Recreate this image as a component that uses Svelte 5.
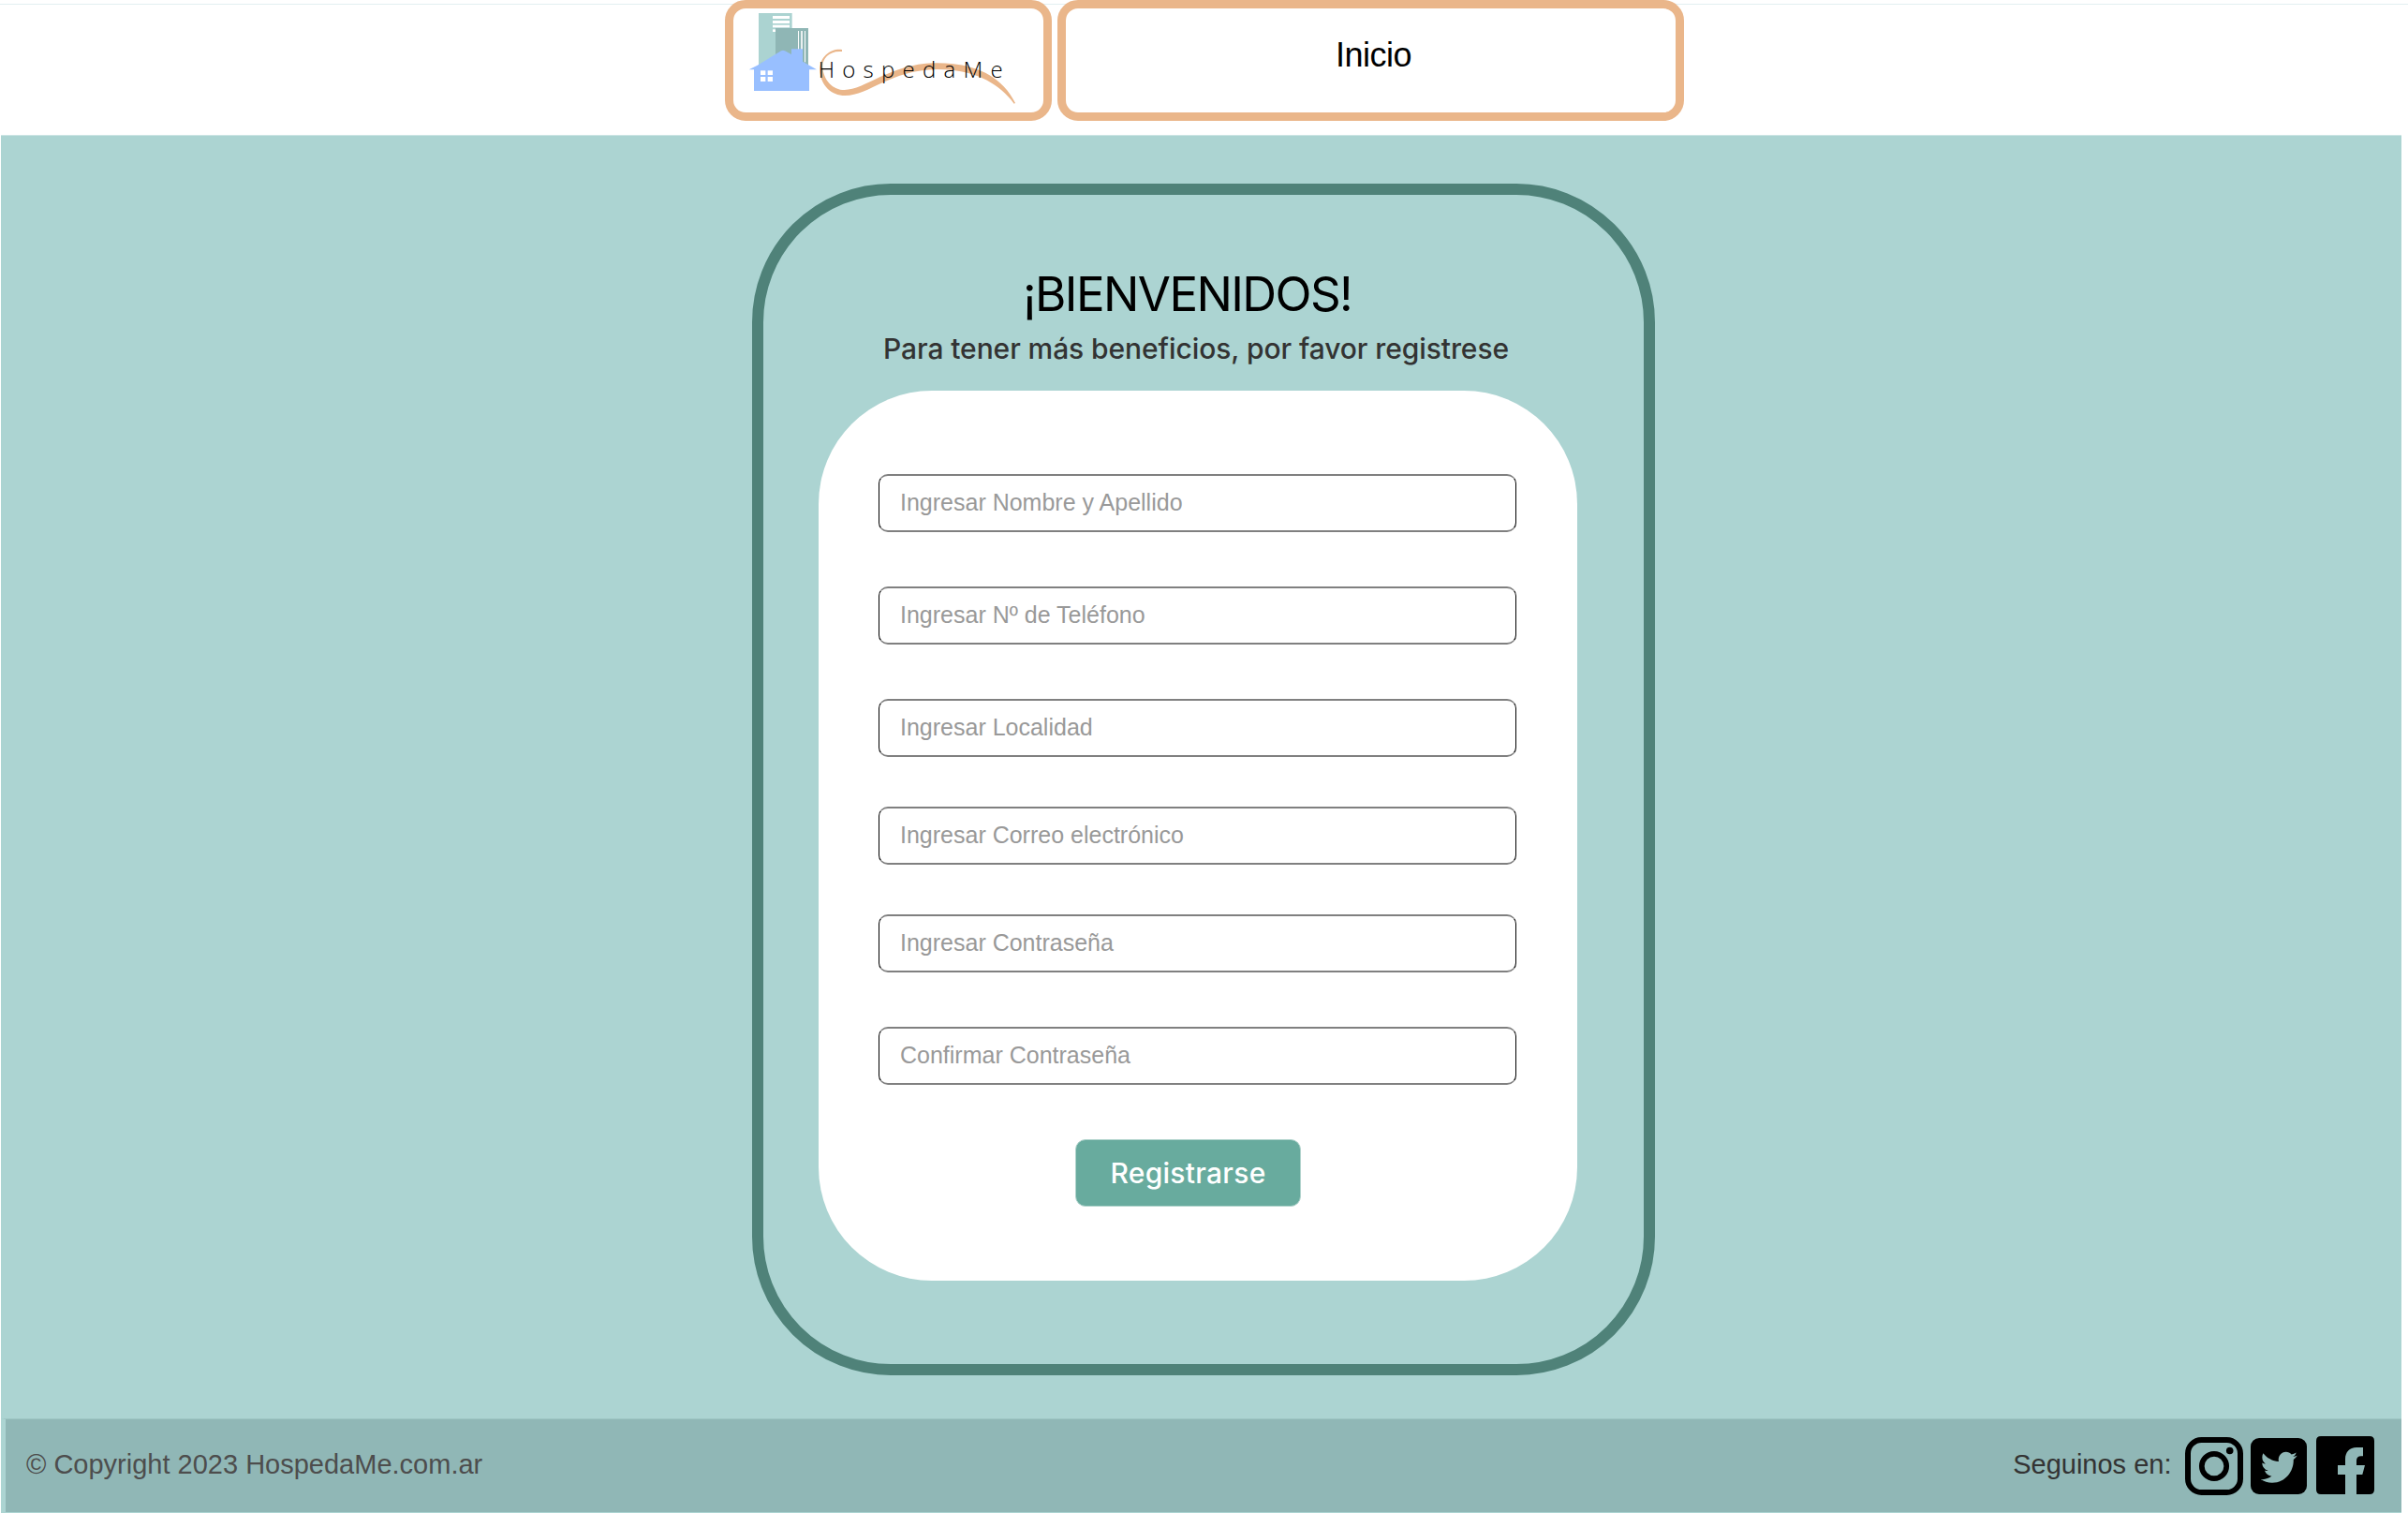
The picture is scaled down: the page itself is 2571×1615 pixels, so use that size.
<script>
  const fields = [
    { label: 'Ingresar Nombre y Apellido', type: 'text' },
    { label: 'Ingresar Nº de Teléfono', type: 'tel' },
    { label: 'Ingresar Localidad', type: 'text' },
    { label: 'Ingresar Correo electrónico', type: 'email', tight: true },
    { label: 'Ingresar Contraseña', type: 'password', tight: true },
    { label: 'Confirmar Contraseña', type: 'password' }
  ];
</script>

<div class="page">
  <header class="header">
    <div class="box brand">
      <svg class="logo" viewBox="69 27 993 333" role="img" aria-label="HospedaMe">
        <!-- towers -->
        <rect x="150" y="42" width="107" height="170" fill="#abd3d1" />
        <g fill="#fff">
          <rect x="195" y="51" width="54" height="9" />
          <rect x="195" y="66" width="54" height="9" />
          <rect x="195" y="80" width="54" height="8" />
          <rect x="195" y="94" width="54" height="8" />
        </g>
        <rect x="204" y="90" width="105" height="122" fill="#8fb6b5" />
        <g fill="#fff">
          <rect x="276" y="99" width="3" height="100" />
          <rect x="285" y="99" width="6" height="100" opacity="0.8" />
          <rect x="297" y="99" width="3" height="100" />
        </g>
        <!-- house -->
        <path fill="#98bfff" d="M119 223 L146 209 L222 163 Q228 159 234 163 L255 174 V157 H291 V197 L336 223 H312 V291 H135 V223 Z" />
        <g fill="#fff">
          <rect x="156" y="226" width="16" height="14" />
          <rect x="179" y="226" width="16" height="14" />
          <rect x="156" y="246" width="16" height="15" />
          <rect x="179" y="246" width="16" height="15" />
        </g>
        <path
          fill="#eab68a"
          d="M417 159 C384 154 346 178 346 224 C348 272 382 306 427 306 C505 306 570 224 722 222 C820 222 912 254 968 332 L972 330 C925 236 830 200 712 202 C570 206 490 288 425 288 C388 288 358 258 355 215 C353 190 374 161 417 165 Z"
        />
        <text x="341" y="249" class="wordmark">HospedaMe</text>
      </svg>
    </div>
    <nav class="box menu"><a href="#inicio">Inicio</a></nav>
  </header>

  <main class="main">
    <section class="card">
      <h1>¡BIENVENIDOS!</h1>
      <p class="lead">Para tener más beneficios, por favor registrese</p>
      <form class="panel">
        {#each fields as field}
          <input class:tight={field.tight} type={field.type} placeholder={field.label} aria-label={field.label} />
        {/each}
        <button type="button">Registrarse</button>
      </form>
    </section>
  </main>

  <footer class="footer">
    <span class="copy">© Copyright 2023 HospedaMe.com.ar</span>
    <div class="social">
      <span class="follow">Seguinos en:</span>
      <svg class="instagram" viewBox="0 0 62 62" aria-hidden="true">
        <rect x="3" y="3" width="56" height="56" rx="14.5" fill="none" stroke="#000" stroke-width="6" />
        <circle cx="31" cy="31" r="13.2" fill="none" stroke="#000" stroke-width="5.7" />
        <circle cx="47.7" cy="14.5" r="3.8" />
      </svg>
      <svg class="twitter" viewBox="0 0 60 60" aria-hidden="true">
        <rect width="60" height="60" rx="9" />
        <path
          fill="#90b7b6"
          transform="translate(2.9 -1.2) scale(.122 .127)"
          d="M351.1 190.8c.2 2.8.2 5.7.2 8.5 0 86.7-66 186.6-186.6 186.6-37.2 0-71.7-10.8-100.7-29.4 5.3.6 10.4.8 15.8.8 30.7 0 58.9-10.4 81.4-28-28.8-.6-53-19.5-61.3-45.5 10.1 1.5 19.2 1.5 29.6-1.2-30-6.1-52.5-32.5-52.5-64.4v-.8c8.7 4.9 18.9 7.9 29.6 8.3a65.447 65.447 0 0 1-29.2-54.6c0-12.2 3.2-23.4 8.9-33.1 32.3 39.8 80.8 65.8 135.2 68.6-9.3-44.5 24-80.6 64-80.6 18.9 0 35.9 7.9 47.9 20.7 14.8-2.8 29-8.3 41.6-15.8-4.9 15.2-15.2 28-28.8 36.1 13.2-1.4 26-5.1 37.8-10.2-8.9 13.1-20.1 24.7-32.9 34z"
        />
      </svg>
      <svg class="facebook" viewBox="0 0 62 62" aria-hidden="true">
        <path
          d="M5 0 H57 Q62 0 62 5 V57 Q62 62 57 62 H43 V41 H49.3 L52 31 H43 V26 Q43 21.3 48 21.3 H50 V12 H43 C35.500 12 31 17 31 24.500 V31 H23 V41 H31 V62 H5 Q0 62 0 57 V5 Q0 0 5 0 Z"
        />
      </svg>
    </div>
  </footer>
</div>

<style>
  :global(body) {
    margin: 0;
    background: #fff;
  }

  .page {
    box-sizing: border-box;
    width: 2571px;
    height: 1615px;
    padding: 0 7.5px 0 1px;
    display: grid;
    grid-template-rows: 144px 1370px 101px;
    overflow: hidden;
    font-family: 'Liberation Sans', Arial, sans-serif;
    background: linear-gradient(#e3eff1, #e3eff1) 0 4px / 100% 1px no-repeat #fff;
  }

  .header {
    display: flex;
    gap: 6px;
    padding-left: 773px;
  }

  .box {
    box-sizing: border-box;
    height: 129px;
    border: 9px solid #eab68a;
    border-radius: 22px;
    background: #fff;
  }

  .brand {
    width: 349px;
  }

  .logo {
    display: block;
    width: 331px;
    height: 111px;
  }

  .wordmark {
    font-family: 'Open Sans', sans-serif;
    font-weight: 300;
    font-size: 72px;
    letter-spacing: 24.8px;
    fill: #000;
  }

  .menu {
    width: 669px;
    display: flex;
    justify-content: center;
  }

  .menu a {
    margin-top: 30px;
    padding-left: 6px;
    font-size: 36px;
    line-height: 40px;
    letter-spacing: -0.5px;
    color: #000;
    text-decoration: none;
  }

  .main {
    box-sizing: border-box;
    padding: 51px 0 0 802px;
    border-top: 1px solid #cbe4e3;
    background: #acd4d2;
  }

  .card {
    box-sizing: border-box;
    width: 964px;
    height: 1272px;
    padding: 76px 0 0 59px;
    border: 12px solid #4f8279;
    border-radius: 148px;
  }

  h1 {
    margin: 0 0 8px 218px;
    font: 400 51px/60px Inter, sans-serif;
    letter-spacing: -1.6px;
    white-space: nowrap;
    color: #000;
  }

  .lead {
    margin: 0 0 25px 69px;
    font: 500 30px/40px Inter, sans-serif;
    letter-spacing: -0.08px;
    white-space: nowrap;
    color: #333;
  }

  .panel {
    box-sizing: border-box;
    width: 810px;
    height: 950px;
    padding: 89px 65px 0 64px;
    display: flex;
    flex-direction: column;
    border-radius: 121px;
    background: #fff;
  }

  input {
    box-sizing: border-box;
    width: 681px;
    height: 62px;
    margin: 0;
    padding: 0 21px 2px 22px;
    border: solid #000;
    border-width: 2px 1px;
    border-color: #808080 #000;
    border-radius: 10px;
    background: #fff;
    font: 25px 'Liberation Sans', Arial, sans-serif;
    letter-spacing: 0;
    outline: none;
  }

  input + input {
    margin-top: 58px;
  }

  input + input.tight {
    margin-top: 53px;
  }

  input::placeholder {
    color: #999;
    opacity: 1;
  }

  button {
    width: 241px;
    height: 72px;
    margin: 58px 0 0 210px;
    padding: 0;
    border: 1px solid #b0d3cc;
    border-radius: 11px;
    background: #68ab9e;
    color: #fff;
    font: 500 30px/70px Inter, sans-serif;
    letter-spacing: 0.28px;
  }

  .footer {
    box-sizing: border-box;
    display: flex;
    justify-content: space-between;
    padding: 18px 29px 0 22px;
    border: solid #acd4d2;
    border-width: 1px 0 1px 5px;
    border-top-color: #9ec6c4;
    background: #90b7b6;
    font-size: 29px;
    line-height: 40px;
  }

  .copy {
    margin-top: 10px;
    color: #4d4d4d;
  }

  .social {
    display: flex;
    align-items: flex-start;
  }

  .follow {
    margin: 10px 14px 0 0;
    color: #333;
  }

  .instagram {
    width: 62px;
    height: 62px;
    margin-top: 1px;
  }

  .twitter {
    width: 60px;
    height: 60px;
    margin: 2px 10px 0 8px;
  }

  .facebook {
    width: 62px;
    height: 62px;
  }
</style>
